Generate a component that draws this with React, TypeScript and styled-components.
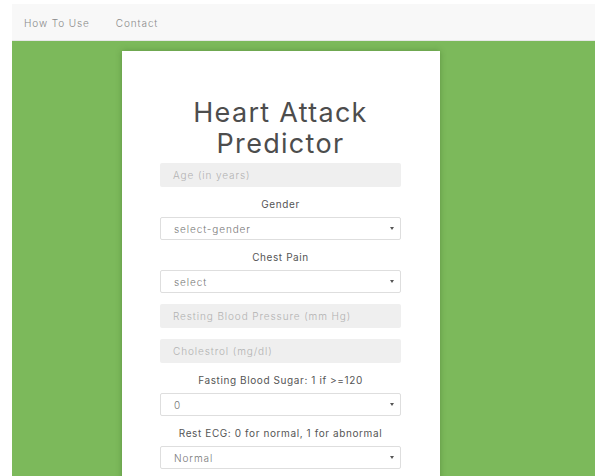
import React from "react";
import styled, { createGlobalStyle } from "styled-components";

const Global = createGlobalStyle`
  html, body { background: #ffffff; }
  body {
    margin: 4px 0 0 12px;
    font-family: "Inter", "Open Sans", "Liberation Sans", sans-serif;
    overflow: hidden;
  }
  * { box-sizing: border-box; }
`;

const NavBar = styled.nav`
  height: 37px;
  background: #f8f8f8;
  border-bottom: 1px solid #e7e7e7;
  display: flex;
  align-items: center;
  gap: 26px;
  padding: 1px 0 0 12px;
`;

const NavLink = styled.a`
  font-size: 10px;
  font-weight: 300;
  color: #8a8a8a;
  text-decoration: none;
  letter-spacing: 0.9px;
`;

const Stage = styled.main`
  background: #7cb95b;
  min-height: 460px;
  padding: 10px 0 0 110px;
`;

const Card = styled.section`
  width: 318px;
  min-height: 440px;
  background: #ffffff;
  box-shadow: 0 0 6px rgba(40, 80, 20, 0.35);
  padding: 46px 39px 0 38px;
  display: flex;
  flex-direction: column;
`;

const Title = styled.h1`
  margin: 0 0 4px;
  font-size: 27px;
  line-height: 31px;
  font-weight: 400;
  color: #4d4d4d;
  text-align: center;
  letter-spacing: 1.3px;
`;

const TextInput = styled.div`
  height: 24px;
  background: #efefef;
  border-radius: 2px;
  display: flex;
  align-items: center;
  padding-left: 13px;
  font-size: 10px;
  font-weight: 300;
  letter-spacing: 0.9px;
  color: #b2b2b2;
  margin-bottom: 11px;
`;

const Label = styled.div`
  font-size: 10px;
  line-height: 13px;
  letter-spacing: 0.6px;
  color: #555555;
  text-align: center;
  margin-bottom: 6px;
`;

const Select = styled.div`
  height: 23px;
  background: #ffffff;
  border: 1px solid #dedede;
  border-radius: 2px;
  display: flex;
  align-items: center;
  justify-content: space-between;
  padding: 0 6px 0 13px;
  font-size: 10px;
  font-weight: 300;
  letter-spacing: 0.9px;
  color: #777777;
  margin-bottom: 11px;
`;

const Caret = styled.span`
  width: 0;
  height: 0;
  border-left: 2.5px solid transparent;
  border-right: 2.5px solid transparent;
  border-top: 3px solid #555555;
`;

const Field = ({ label, value }: { label: string; value: string }) => (
  <>
    <Label>{label}</Label>
    <Select>
      <span>{value}</span>
      <Caret />
    </Select>
  </>
);

export default function App() {
  return (
    <>
      <Global />
      <NavBar>
        <NavLink href="#">How To Use</NavLink>
        <NavLink href="#">Contact</NavLink>
      </NavBar>
      <Stage>
        <Card>
          <Title>
            Heart Attack
            <br />
            Predictor
          </Title>
          <TextInput>Age (in years)</TextInput>
          <Field label="Gender" value="select-gender" />
          <Field label="Chest Pain" value="select" />
          <TextInput>Resting Blood Pressure (mm Hg)</TextInput>
          <TextInput>Cholestrol (mg/dl)</TextInput>
          <Field label="Fasting Blood Sugar: 1 if >=120" value="0" />
          <Field label="Rest ECG: 0 for normal, 1 for abnormal" value="Normal" />
        </Card>
      </Stage>
    </>
  );
}
